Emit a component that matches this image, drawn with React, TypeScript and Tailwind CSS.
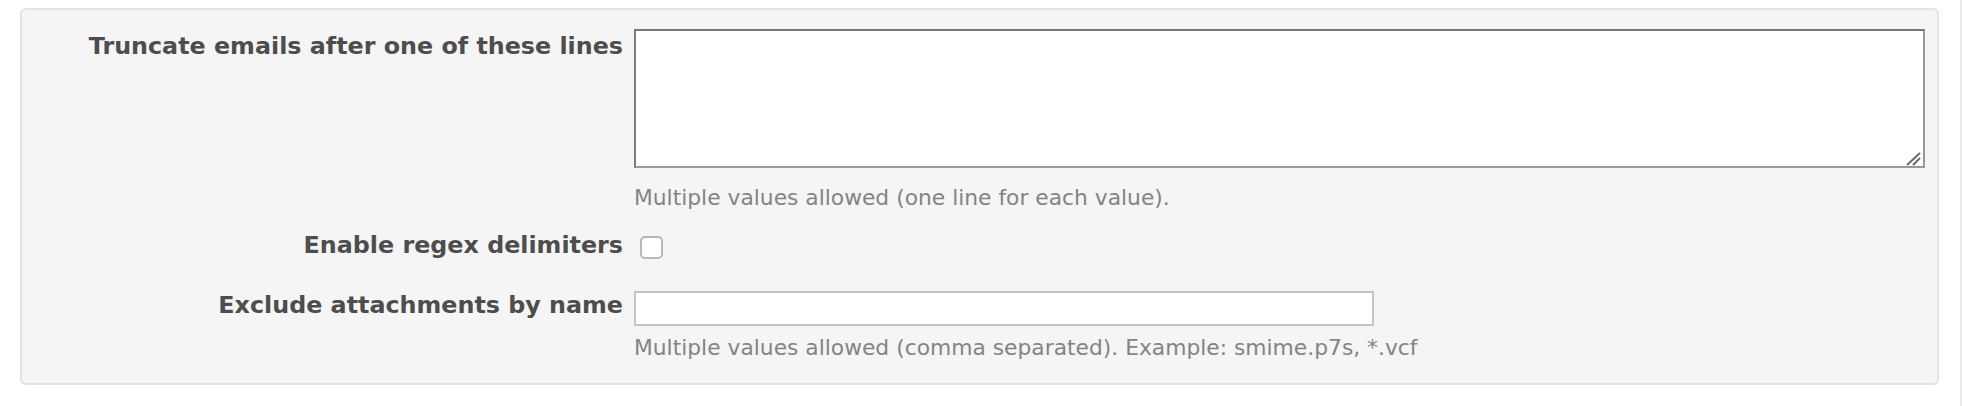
import React from 'react';

const font = "font-['DejaVu_Sans',sans-serif]";

export default function App() {
  return (
    <div className={`w-[1962px] h-[406px] bg-white border-r-2 border-[#ebebeb] pt-2 pl-5 pr-[21px] ${font}`}>
      {/* settings well */}
      <div className="border-2 border-[#e3e3e3] rounded-[6px] bg-[#f5f5f5] pt-[19px] pb-[23px] pr-3">
        {/* Truncate row */}
        <div className="flex items-start">
          <label className="w-[601px] shrink-0 text-right text-[23.8px] leading-[28px] font-bold text-[#4d4d4d] mt-[3px]">
            Truncate emails after one of these lines
          </label>
          <div className="ml-[11px] flex-1">
            <div className="relative">
              <textarea className="block w-full h-[139px] resize-none bg-white border-2 border-t-[#777] border-l-[#7d7d7d] border-r-[#999] border-b-[#999]" />
              <svg className="absolute right-[4px] bottom-[2px]" width="16" height="16" viewBox="0 0 16 16">
                <line x1="2" y1="15" x2="15" y2="3" stroke="#6a6a6a" strokeWidth="2" />
                <line x1="8" y1="15" x2="15" y2="8" stroke="#6a6a6a" strokeWidth="2" />
              </svg>
            </div>
            <p className="mt-[18px] text-[21.8px] leading-[24px] text-[#848484]">
              Multiple values allowed (one line for each value).
            </p>
          </div>
        </div>

        {/* regex row */}
        <div className="flex items-start mt-[21px]">
          <label className="w-[601px] shrink-0 text-right text-[23.8px] leading-[28px] font-bold text-[#4d4d4d]">
            Enable regex delimiters
          </label>
          <div className="ml-[11px] flex-1">
            <input
              type="checkbox"
              className="appearance-none block mt-[5px] ml-[6px] w-[23px] h-[23px] bg-white border-2 border-[#b8b8b8] rounded-[5px]"
            />
          </div>
        </div>

        {/* attachments row */}
        <div className="flex items-start mt-[32px]">
          <label className="w-[601px] shrink-0 text-right text-[23.8px] leading-[28px] font-bold text-[#4d4d4d]">
            Exclude attachments by name
          </label>
          <div className="ml-[11px] flex-1">
            <input type="text" className="block w-[740px] h-[35px] bg-white border-2 border-[#c4c4c4]" />
            <p className="mt-[10px] text-[21.8px] leading-[24px] text-[#848484]">
              Multiple values allowed (comma separated). Example: smime.p7s, *.vcf
            </p>
          </div>
        </div>
      </div>
    </div>
  );
}
